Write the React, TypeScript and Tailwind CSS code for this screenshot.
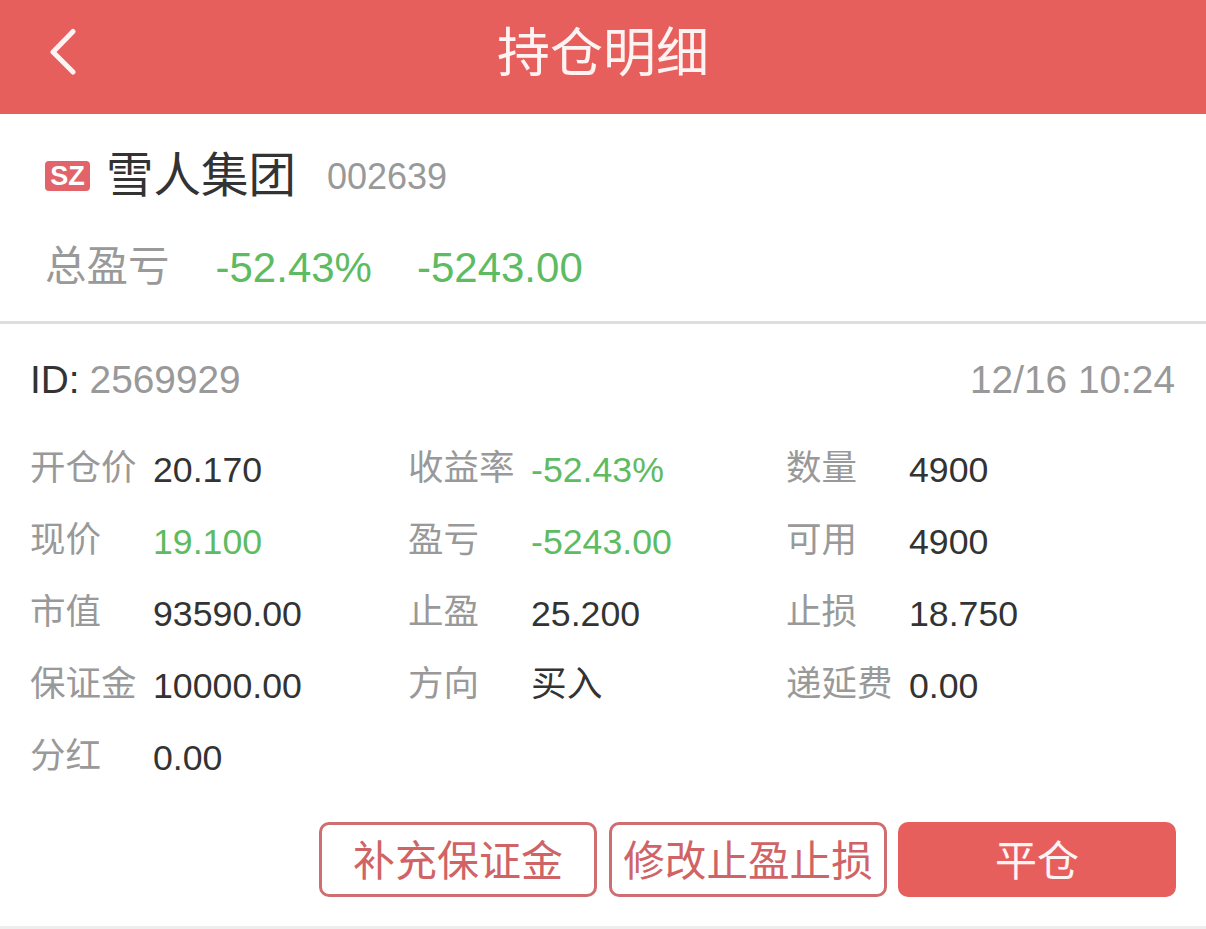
const FONT = "font-['Liberation_Sans','Noto_Sans_CJK_SC',sans-serif]";

type CellData = { label: string; value: string; green?: boolean; cjk?: boolean };

const rows: CellData[][] = [
  [
    { label: "开仓价", value: "20.170" },
    { label: "收益率", value: "-52.43%", green: true },
    { label: "数量", value: "4900" },
  ],
  [
    { label: "现价", value: "19.100", green: true },
    { label: "盈亏", value: "-5243.00", green: true },
    { label: "可用", value: "4900" },
  ],
  [
    { label: "市值", value: "93590.00" },
    { label: "止盈", value: "25.200" },
    { label: "止损", value: "18.750" },
  ],
  [
    { label: "保证金", value: "10000.00" },
    { label: "方向", value: "买入", cjk: true },
    { label: "递延费", value: "0.00" },
  ],
  [{ label: "分红", value: "0.00" }],
];

function Cell({ label, value, green, cjk }: CellData) {
  return (
    <div className="flex items-center h-[72px]">
      <span className="w-[123px] shrink-0 text-[35.5px] text-[#999999] whitespace-nowrap pb-[2px]">{label}</span>
      <span
        className={`text-[35.7px] whitespace-nowrap ${cjk ? "pb-[2px]" : "pt-[2px]"} ${green ? "text-[#5dbb62]" : "text-[#333333]"}`}
      >
        {value}
      </span>
    </div>
  );
}

export default function App() {
  return (
    <div className={`${FONT} w-[1206px] h-[929px] bg-white overflow-hidden flex flex-col`}>
      <header className="relative h-[114px] shrink-0 bg-[#e75f5c] flex items-center justify-center pb-[8px]">
        <svg className="absolute left-[48px] top-[28px]" width="30" height="48" viewBox="0 0 30 48" fill="none">
          <path d="M25 3.5 L5 24 L25 44" stroke="#fdf3f2" strokeWidth="5" strokeLinecap="round" strokeLinejoin="round" />
        </svg>
        <h1 className="text-[53px] font-normal text-[#fdf3f2] leading-none">持仓明细</h1>
      </header>

      <section className="h-[207px] shrink-0 flex flex-col">
        <div className="flex items-center pl-[45px] h-[124px]">
          <span className="w-[45px] h-[30px] bg-[#e2646a] rounded-[4px] text-white text-[27px] font-bold leading-[30px] text-center">
            SZ
          </span>
          <span className="ml-[16px] text-[47.5px] text-[#333333] leading-none">雪人集团</span>
          <span className="ml-[31px] mt-[2px] text-[36px] text-[#999999]">002639</span>
        </div>
        <div className="flex items-center pl-[45px] h-[60px] pb-[2px]">
          <span className="text-[41.5px] text-[#999999]">总盈亏</span>
          <span className="ml-[46px] text-[42px] text-[#5dbb62]">-52.43%</span>
          <span className="ml-[45px] text-[42px] text-[#5dbb62]">-5243.00</span>
        </div>
      </section>

      <div className="h-[3px] shrink-0 bg-[#dedede]" />

      <section className="flex flex-col pl-[30px] pr-[31px] flex-1">
        <div className="flex items-center justify-between h-[110px] pt-[2px] text-[38.8px] text-[#999999]">
          <span className="flex">
            <span className="text-[#333333]">ID:</span>
            <span className="ml-[10px]">2569929</span>
          </span>
          <span>12/16 10:24</span>
        </div>

        <div className="flex flex-col">
          {rows.map((row) => (
            <div key={row[0].label} className="grid grid-cols-[378px_378px_1fr]">
              {row.map((c) => (
                <Cell key={c.label} {...c} />
              ))}
            </div>
          ))}
        </div>

        <div className="flex justify-end -mr-[1px] mt-[28px]">
          <button className="w-[278px] h-[75px] mr-[12px] pt-[5px] border-[3px] border-[#cf6e70] rounded-[10px] text-[42px] text-[#cf6365] leading-none">
            补充保证金
          </button>
          <button className="w-[278px] h-[75px] mr-[11px] pt-[5px] border-[3px] border-[#cf6e70] rounded-[10px] text-[41.6px] text-[#cf6365] leading-none">
            修改止盈止损
          </button>
          <button className="w-[278px] h-[75px] pt-[5px] bg-[#e75f5c] rounded-[10px] text-[42px] text-[#fdf3f2] leading-none">
            平仓
          </button>
        </div>
      </section>

      <div className="h-[3px] shrink-0 bg-[#eeeeee]" />
    </div>
  );
}
